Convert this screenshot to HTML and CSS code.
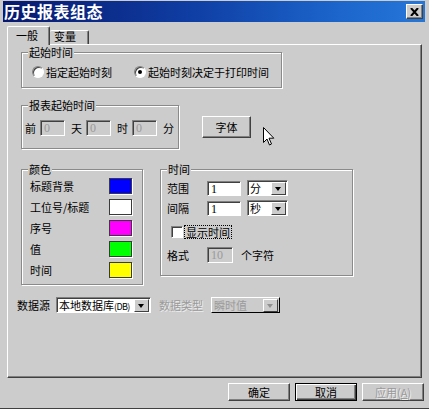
FILE: index.html
```html
<!DOCTYPE html>
<html lang="zh-CN">

<head>
    <meta charset="UTF-8">
    <title>历史报表组态</title>
    <link rel="stylesheet" href="styles.css">
</head>

<body>
    <div class="window">
        <div class="titlebar">
            <span class="title">历史报表组态</span>
            <span class="close">
                <svg width="9" height="8" viewBox="0 0 9 8">
                    <path d="M1 0 L8 8 M8 0 L1 8" stroke="#000" stroke-width="2" />
                </svg>
            </span>
        </div>

        <!-- 选项卡 -->
        <div class="tabs">
            <div class="tab active">一般</div>
            <div class="tab">变量</div>
        </div>

        <div class="panel">
            <!-- 起始时间 -->
            <div class="group g-start">
                <span class="legend">起始时间</span>
                <label class="radio"><span class="dot"></span>指定起始时刻</label>
                <label class="radio second"><span class="dot checked"></span>起始时刻决定于打印时间</label>
            </div>

            <div class="row2">
                <!-- 报表起始时间 -->
                <div class="group g-offset">
                    <span class="legend">报表起始时间</span>
                    <span class="unit first">前</span>
                    <span class="input disabled w25">0</span>
                    <span class="unit">天</span>
                    <span class="input disabled w25">0</span>
                    <span class="unit">时</span>
                    <span class="input disabled w25">0</span>
                    <span class="unit">分</span>
                </div>
                <div class="btn font-btn">字体</div>
            </div>

            <div class="row3">
                <!-- 颜色 -->
                <div class="group g-color">
                    <span class="legend">颜色</span>
                    <div class="color-row"><span>标题背景</span><span class="swatch blue"></span></div>
                    <div class="color-row"><span>工位号/标题</span><span class="swatch white"></span></div>
                    <div class="color-row"><span>序号</span><span class="swatch pink"></span></div>
                    <div class="color-row"><span>值</span><span class="swatch green"></span></div>
                    <div class="color-row"><span>时间</span><span class="swatch yellow"></span></div>
                </div>

                <!-- 时间 -->
                <div class="group g-time">
                    <span class="legend">时间</span>
                    <div class="time-row">
                        <span class="time-label">范围</span>
                        <span class="input w34">1</span>
                        <span class="select w40"><span class="val">分</span><span class="arrow"></span></span>
                    </div>
                    <div class="time-row r2">
                        <span class="time-label">间隔</span>
                        <span class="input w34">1</span>
                        <span class="select w40"><span class="val">秒</span><span class="arrow"></span></span>
                    </div>
                    <div class="check-row">
                        <span class="checkbox"></span>
                        <span class="focus">显示时间</span>
                    </div>
                    <div class="time-row r4">
                        <span class="time-label">格式</span>
                        <span class="input disabled w26">10</span>
                        <span class="suffix">个字符</span>
                    </div>
                </div>
            </div>

            <div class="row4">
                <span class="src-label">数据源</span>
                <span class="select w95"><span class="val">本地数据库<small>(DB)</small></span><span class="arrow"></span></span>
                <span class="gray-text type-label">数据类型</span>
                <span class="select disabled w69"><span class="val">瞬时值</span><span class="arrow"></span></span>
            </div>
        </div>

        <div class="footer">
            <div class="btn">确定</div>
            <div class="btn default">取消</div>
            <div class="btn disabled-btn">应用(<u>A</u>)</div>
        </div>

        <svg class="cursor" width="12" height="19" viewBox="0 0 12 19">
            <path d="M0.5 0.5 L0.5 15.5 L4 12 L6.5 18 L8.5 17 L6 11.2 L10.8 11.2 Z" fill="#fff" stroke="#000"
                stroke-width="1" />
        </svg>
    </div>
</body>

</html>
```

FILE: styles.css
```css
* {
    margin: 0;
    padding: 0;
    box-sizing: border-box;
}

body {
    background: #cccccc;
    font-family: "Noto Sans CJK SC", "Liberation Sans", sans-serif;
    font-size: 11px;
    color: #000;
}

.window {
    position: relative;
    width: 429px;
    height: 409px;
    padding: 1px 4px 0 3px;
    background: #cccccc;
    border-bottom: 1px solid #404040;
}

.titlebar {
    position: relative;
    height: 21px;
    background: linear-gradient(to right, #08186e, #0f3ea4 45%, #1c66cc 80%, #2676d8);
    display: flex;
    align-items: center;
}

.title {
    color: #fff;
    font-weight: bold;
    font-size: 16px;
    letter-spacing: 0.5px;
    padding-left: 1px;
    line-height: 21px;
}

.close {
    position: absolute;
    right: 2px;
    top: 3px;
    width: 17px;
    height: 15px;
    background: #cccccc;
    border: 1px solid;
    border-color: #fff #404040 #404040 #fff;
    box-shadow: inset -1px -1px #808080;
    display: flex;
    align-items: center;
    justify-content: center;
}

/* 选项卡 */
.tabs {
    height: 22px;
    margin-left: 4px;
    display: flex;
    align-items: flex-end;
}

.tab {
    position: relative;
    height: 14px;
    width: 39px;
    line-height: 11px;
    padding-left: 4px;
    border-top: 1px solid #fff;
    border-right: 1px solid #404040;
    box-shadow: inset -1px 0 #808080;
    border-radius: 2px 2px 0 0;
}

.tab.active {
    width: 43px;
    height: 19px;
    margin-bottom: -1px;
    z-index: 2;
    background: #cccccc;
    padding-left: 8px;
    line-height: 17px;
    border-left: 1px solid #fff;
}

.panel {
    position: relative;
    margin-left: 4px;
    width: 415px;
    height: 334px;
    border: 1px solid;
    border-color: #fff #404040 #404040 #fff;
    box-shadow: inset -1px -1px #808080;
    padding: 7px 0 0 13px;
}

/* 分组框 */
.group {
    position: relative;
    border: 1px solid #8a8a8a;
    box-shadow: inset 1px 1px #fff, 1px 1px #fff;
}

.legend {
    position: absolute;
    top: -6px;
    left: 6px;
    padding: 0 1px;
    background: #cccccc;
    line-height: 11px;
    white-space: nowrap;
}

.g-start {
    width: 261px;
    height: 36px;
    padding: 12px 0 0 10px;
    display: flex;
    align-items: flex-start;
}

.radio {
    display: flex;
    align-items: center;
    flex-shrink: 0;
    white-space: nowrap;
    height: 14px;
    line-height: 14px;
}

.radio.second {
    margin-left: 22px;
}

.dot {
    position: relative;
    width: 12px;
    height: 12px;
    margin-right: 2px;
    border-radius: 50%;
    background: #fff;
    border: 1px solid;
    border-color: #808080 #fff #fff #808080;
    box-shadow: inset 1px 1px #404040;
}

.dot.checked::after {
    content: "";
    position: absolute;
    left: 3px;
    top: 3px;
    width: 4px;
    height: 4px;
    border-radius: 50%;
    background: #000;
}

.row2 {
    display: flex;
    margin-top: 17px;
}

.g-offset {
    width: 158px;
    height: 44px;
    padding: 14px 0 0 3px;
    display: flex;
    align-items: flex-start;
}

.unit {
    margin: 0 4px 0 6px;
    line-height: 16px;
}

.unit.first {
    margin-left: 0;
}

.input {
    height: 16px;
    background: #fff;
    border: 1px solid;
    border-color: #808080 #fff #fff #808080;
    box-shadow: inset 1px 1px #404040;
    line-height: 14px;
    padding-left: 3px;
    font-family: "Liberation Serif", serif;
    font-size: 12px;
}

.input.disabled {
    background: #cccccc;
    color: #9a9a9a;
}

.w25 { width: 25px; }
.w26 { width: 26px; }
.w34 { width: 34px; height: 15px; }
.w40 { width: 41px; }
.w95 { width: 95px; }
.w69 { width: 69px; }

.btn {
    width: 62px;
    height: 18px;
    line-height: 16px;
    text-align: center;
    background: #cccccc;
    border: 1px solid;
    border-color: #fff #404040 #404040 #fff;
    box-shadow: inset -1px -1px #808080;
}

.font-btn {
    width: 49px;
    height: 22px;
    line-height: 20px;
    margin: 11px 0 0 23px;
}

.row3 {
    display: flex;
    align-items: flex-start;
    margin-top: 20px;
}

.g-color {
    width: 122px;
    height: 116px;
    padding: 8px 10px 0 8px;
}

.color-row {
    display: flex;
    justify-content: space-between;
    align-items: center;
    height: 16px;
    margin-bottom: 5px;
}

.swatch {
    width: 23px;
    height: 16px;
    border: 1px solid #3a3a3a;
    box-shadow: 1px 1px #fff;
}

.blue { background: #0000ff; }
.white { background: #ffffff; }
.pink { background: #ff00ff; }
.green { background: #00ff00; }
.yellow { background: #ffff00; }

.g-time {
    width: 193px;
    height: 107px;
    margin-left: 17px;
    padding: 10px 0 0 6px;
}

.time-row {
    display: flex;
    align-items: center;
    height: 16px;
}

.time-row.r2 {
    margin-top: 4px;
}

.time-row.r4 {
    margin-top: 8px;
}

.time-label {
    width: 40px;
}

.time-row .select {
    margin-left: 6px;
}

.suffix {
    margin-left: 8px;
}

.check-row {
    display: flex;
    align-items: center;
    height: 14px;
    margin: 9px 0 0 4px;
}

.checkbox {
    width: 12px;
    height: 12px;
    background: #fff;
    border: 1px solid;
    border-color: #808080 #fff #fff #808080;
    box-shadow: inset 1px 1px #404040;
    margin-right: 1px;
}

.focus {
    border: 1px dotted #000;
    padding: 0 1px;
    line-height: 12px;
}

/* 下拉框 */
.select {
    position: relative;
    display: flex;
    height: 16px;
    background: #fff;
    border: 1px solid;
    border-color: #808080 #fff #fff #808080;
    box-shadow: inset 1px 1px #404040;
    padding: 1px 1px 0 0;
}

.select .val {
    flex: 1;
    padding-left: 2px;
    line-height: 13px;
    white-space: nowrap;
}

.select small {
    font-size: 9px;
    letter-spacing: -0.6px;
}

.select .arrow {
    position: relative;
    flex-shrink: 0;
    width: 15px;
    height: 13px;
    background: #cccccc;
    border: 1px solid;
    border-color: #fff #404040 #404040 #fff;
}

.select .arrow::after {
    content: "";
    position: absolute;
    left: 3px;
    top: 4px;
    border-left: 3.5px solid transparent;
    border-right: 3.5px solid transparent;
    border-top: 4px solid #000;
}

.select.disabled {
    background: #cccccc;
    color: #9a9a9a;
    border-color: #fff #000 #000 #fff;
    box-shadow: none;
}

.select.disabled .arrow::after {
    border-top-color: #909090;
}

.row4 {
    display: flex;
    align-items: center;
    margin: 11px 0 0 -4px;
    height: 17px;
}

.src-label {
    margin-right: 6px;
}

.gray-text {
    color: #9a9a9a;
    text-shadow: 1px 1px #eee;
}

.type-label {
    margin: 0 8px 0 8px;
}

.footer {
    display: flex;
    justify-content: flex-end;
    gap: 5px;
    margin-top: 5px;
    padding-right: 1px;
}

.btn.default {
    border: 1px solid #000;
    box-shadow: inset 1px 1px #fff, inset -1px -1px #404040, inset -2px -2px #808080;
}

.disabled-btn {
    color: #9a9a9a;
    text-shadow: 1px 1px #eee;
}

.cursor {
    position: absolute;
    left: 263px;
    top: 127px;
}
```
